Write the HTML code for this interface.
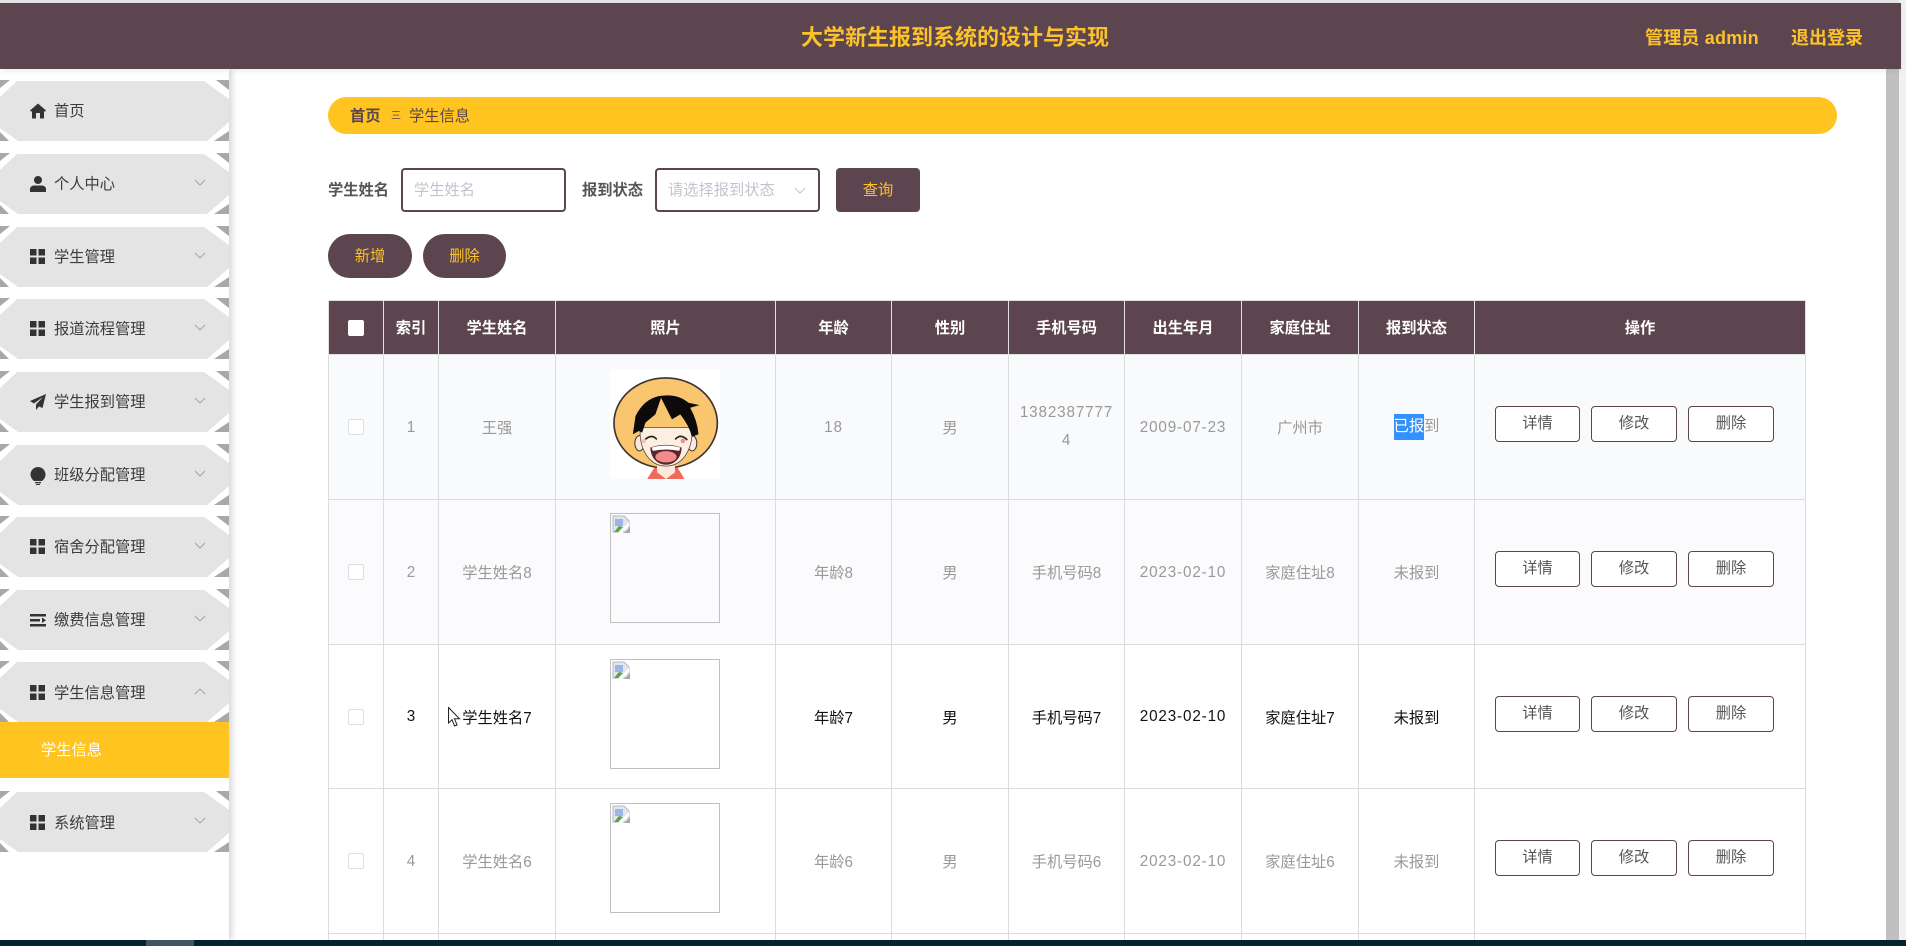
<!DOCTYPE html>
<html lang="zh-CN">
<head>
<meta charset="utf-8">
<title>学生信息</title>
<style>
*{box-sizing:border-box}
html,body{margin:0;padding:0;width:1906px;height:946px;overflow:hidden;background:#fff}
#root{position:relative;width:1906px;height:946px;overflow:hidden;background:#fff;font-family:"Liberation Sans","Noto Sans CJK SC",sans-serif;font-size:15.25px;color:#333}
.abs{position:absolute}
#top{position:absolute;left:0;top:0;width:1906px;height:3px;background:#e6e4e5}
#hd{position:absolute;left:0;top:3px;width:1901px;height:66px;background:#5c454e;color:#fcc22c;font-weight:700;box-shadow:0 2px 6px rgba(0,0,0,.08);z-index:5}
#hd span{position:absolute;white-space:nowrap}
#track{position:absolute;left:1899px;top:0;width:7px;height:946px;background:#f1f1f2}
#thumb{position:absolute;left:1886px;top:69px;width:13px;height:877px;background:#c0c0c0}
#side{position:absolute;left:0;top:69px;width:229px;height:871px;background:#fff;box-shadow:3px 0 6px rgba(0,0,0,.16)}
.it{position:absolute;left:0;width:229px;height:61px}
.it>svg.bg{position:absolute;left:0;top:0}
.it .t{position:absolute;left:54px;top:21px;line-height:22px;color:#3c3c3c;white-space:nowrap}
.it .i{position:absolute;left:30px;top:23px}
.it .c{position:absolute;left:193px;top:26px}
#sub{position:absolute;left:0;top:722px;width:229px;height:56px;background:#ffc420;color:#fff;line-height:58px;padding-left:41px}
#crumb{position:absolute;left:328px;top:97px;width:1509px;height:37px;border-radius:19px;background:#ffc420;line-height:39px;color:#5c454e;white-space:nowrap}
#crumb b,#crumb i,#crumb span{position:absolute;top:0;font-style:normal}
.lbl{position:absolute;top:168px;line-height:46px;color:#555;font-weight:700}
.inp{position:absolute;top:168px;height:44px;width:165px;border:2px solid #5c454e;border-radius:4px;background:#fff;color:#c0c4cc;line-height:41px;padding-left:11px;white-space:nowrap}
.btn{position:absolute;height:44px;background:#5c454e;color:#fcc22c;text-align:center;line-height:45px}
#wrap{position:absolute;left:328px;top:300px;width:1478px;height:640px;overflow:hidden}
#tb{width:1477px;border-collapse:collapse;table-layout:fixed;text-align:center;color:#999}
#tb th{height:54px;background:#5c454e;color:#fff;font-weight:700;border:1px solid #e3dfe1;padding:0 0 2px}
#tb th.c{padding:0}
#tb td{height:145px;border:1px solid #dcdcdf;padding:0;vertical-align:middle}
#tb tr.h td{height:144px}
#tb tr.e td{height:8px}
#tb tr.a td{background:#f9fafc}
#tb tr.b td{background:#fbfbfd}
#tb tr.h td{color:#111;background:#fff}
.n{letter-spacing:.85px}
.cb{display:inline-block;width:16px;height:16px;border:1px solid #dcdfe6;border-radius:2px;background:#fff;vertical-align:middle;position:relative;top:0}
.ph{display:block;width:110px;height:110px;margin:0 auto;position:relative;top:-3px;left:-.5px}
tr.b .ph{top:-4px}
.ph.br{border:1px solid #c0c0c0}
.ph.br svg{position:absolute;left:1px;top:1px}
.ops{display:flex;padding-left:20px;position:relative;top:-3px}
.ops span{display:block;width:86px;height:36px;margin-right:11px;border:1px solid #5c454e;border-radius:4px;color:#555;line-height:33px;background:#fff;text-align:center}
.ops span:first-child{width:85px}
.sel{background:#3390ff;color:#fff;display:inline-block;line-height:26px;height:26px}
#bar{position:absolute;left:0;top:940px;width:1906px;height:6px;background:#03242e;z-index:8}
#bar i{position:absolute;left:146px;top:0;width:48px;height:6px;background:#3d5660}
</style>
</head>
<body>
<div id="root">
<svg width="0" height="0" style="position:absolute">
<defs>
<symbol id="m" viewBox="0 0 229 61">
<polygon fill="#a8a8a8" points="0,0 10,0 0,8"/><polygon fill="#a8a8a8" points="216,0 229,0 229,10"/>
<polygon fill="#a8a8a8" points="229,51 229,61 214,61"/><polygon fill="#a8a8a8" points="0,52 0,61 9,61"/>
<polygon fill="#e4e4e4" points="17,1 204,1 229,19 229,42 207,61 18,61 0,48 0,17"/>
</symbol>
<symbol id="g" viewBox="0 0 15 15"><path fill="#333" d="M0 0h6.500v6.500H0zM8.500 0h6.500v6.500H8.500zM0 8.500h6.500v6.500H0zM8.500 8.500h6.500v6.500H8.500z"/></symbol>
<symbol id="v" viewBox="0 0 14 8"><path fill="none" stroke="#a3a3a3" d="M2 1l5 5 5-5"/></symbol>
<symbol id="u" viewBox="0 0 14 8"><path fill="none" stroke="#a3a3a3" d="M2 7l5-5 5 5"/></symbol>
<symbol id="bk" viewBox="0 0 19 19"><path fill="#dfe6f2" stroke="#b8b8b8" d="M1 1h11l5 5v11H1z"/><path fill="#9ab6e4" d="M3 4h8v7H3z"/><path fill="#5aa53a" d="M2 17l5-6 4 1-5 5z"/><path fill="#fff" d="M6 18L17 7v4l-7 7z"/><path fill="#a8a8a8" d="M18 12v6h-6z"/></symbol>
</defs>
</svg>

<div id="top"></div>
<div id="hd">
  <span style="left:801px;top:20px;font-size:22px;line-height:30px">大学新生报到系统的设计与实现</span>
  <span style="left:1645px;top:21px;font-size:18px;line-height:28px;letter-spacing:.2px">管理员 admin</span>
  <span style="left:1791px;top:21px;font-size:18px;line-height:28px">退出登录</span>
</div>
<div id="track"></div>
<div id="thumb"></div>

<div id="side"></div>

<div class="it" style="top:80px"><svg class="bg" width="229" height="61"><use href="#m"/></svg>
<svg class="i" width="16" height="16" viewBox="0 0 16 16"><path fill="#333" d="M8 .5L0 7.500l1 1.200L2 8v7.500h4V10h4v5.500h4V8l1 .7 1-1.200z"/></svg><span class="t">首页</span></div>

<div class="it" style="top:153px"><svg class="bg" width="229" height="61"><use href="#m"/></svg>
<svg class="i" width="16" height="16" viewBox="0 0 16 16"><circle cx="8" cy="4" r="4" fill="#333"/><path fill="#333" d="M0 16v-3c0-2 2-3.500 4-3.500h8c2 0 4 1.500 4 3.500v3z"/></svg><span class="t">个人中心</span><svg class="c" width="14" height="8"><use href="#v"/></svg></div>

<div class="it" style="top:226px"><svg class="bg" width="229" height="61"><use href="#m"/></svg>
<svg class="i" width="15" height="15"><use href="#g"/></svg><span class="t">学生管理</span><svg class="c" width="14" height="8"><use href="#v"/></svg></div>

<div class="it" style="top:298px"><svg class="bg" width="229" height="61"><use href="#m"/></svg>
<svg class="i" width="15" height="15"><use href="#g"/></svg><span class="t">报道流程管理</span><svg class="c" width="14" height="8"><use href="#v"/></svg></div>

<div class="it" style="top:371px"><svg class="bg" width="229" height="61"><use href="#m"/></svg>
<svg class="i" width="16" height="16" viewBox="0 0 16 16"><path fill="#333" d="M16 0L0 7l4 2.500L13 3 6 10.500V16l3-3.500 3.500 1.500z"/></svg><span class="t">学生报到管理</span><svg class="c" width="14" height="8"><use href="#v"/></svg></div>

<div class="it" style="top:444px"><svg class="bg" width="229" height="61"><use href="#m"/></svg>
<svg class="i" width="16" height="18" viewBox="0 0 16 18"><path fill="#333" d="M8 0a7.500 7.500 0 0 1 4.500 13.500v.5h-9v-.5A7.500 7.500 0 0 1 8 0zM5 15h6v1.200H5zM6 17h4v1H6z"/></svg><span class="t">班级分配管理</span><svg class="c" width="14" height="8"><use href="#v"/></svg></div>

<div class="it" style="top:516px"><svg class="bg" width="229" height="61"><use href="#m"/></svg>
<svg class="i" width="15" height="15"><use href="#g"/></svg><span class="t">宿舍分配管理</span><svg class="c" width="14" height="8"><use href="#v"/></svg></div>

<div class="it" style="top:589px"><svg class="bg" width="229" height="61"><use href="#m"/></svg>
<svg class="i" width="16" height="16" viewBox="0 0 16 16"><path fill="#333" d="M0 2h16v2.500H0zM0 7h10v2.500H0zM0 12h16v2.500H0zM12 5.500l4 2.800-4 2.700z"/></svg><span class="t">缴费信息管理</span><svg class="c" width="14" height="8"><use href="#v"/></svg></div>

<div class="it" style="top:661px"><svg class="bg" width="229" height="61"><use href="#m"/></svg>
<svg class="i" width="15" height="15" style="top:24px"><use href="#g"/></svg><span class="t" style="top:22px">学生信息管理</span><svg class="c" width="14" height="8"><use href="#u"/></svg></div>

<div id="sub">学生信息</div>

<div class="it" style="top:791px"><svg class="bg" width="229" height="61"><use href="#m"/></svg>
<svg class="i" width="15" height="15" style="top:24px"><use href="#g"/></svg><span class="t" style="top:22px">系统管理</span><svg class="c" width="14" height="8"><use href="#v"/></svg></div>

<div id="crumb"><b style="left:22px">首页</b><i style="left:63px;font-size:10px;font-weight:400">三</i><span style="left:81px">学生信息</span></div>

<div class="lbl" style="left:328px">学生姓名</div>
<div class="inp" style="left:401px">学生姓名</div>
<div class="lbl" style="left:582px">报到状态</div>
<div class="inp" style="left:655px">请选择报到状态<svg style="position:absolute;left:136px;top:17px" width="14" height="8"><path fill="none" stroke="#c0c4cc" d="M2 1l5 5 5-5"/></svg></div>
<div class="btn" style="left:836px;top:168px;width:84px;border-radius:4px">查询</div>
<div class="btn" style="left:328px;top:234px;width:84px;border-radius:22px">新增</div>
<div class="btn" style="left:423px;top:234px;width:83px;border-radius:22px">删除</div>

<div id="wrap">
<table id="tb">
<colgroup><col style="width:55px"><col style="width:55px"><col style="width:117px"><col style="width:220px"><col style="width:116px"><col style="width:117px"><col style="width:116px"><col style="width:117px"><col style="width:117px"><col style="width:116px"><col style="width:331px"></colgroup>
<tr><th class="c"><span class="cb" style="border-color:#fff"></span></th><th>索引</th><th>学生姓名</th><th>照片</th><th>年龄</th><th>性别</th><th>手机号码</th><th>出生年月</th><th>家庭住址</th><th>报到状态</th><th>操作</th></tr>

<tr class="a"><td><span class="cb"></span></td><td>1</td><td>王强</td><td>
<svg class="ph" width="110" height="110" viewBox="58 53 332 332" style="background:#fff">
<ellipse cx="226" cy="216" rx="156" ry="136" fill="#f9c66f" stroke="#3d3330" stroke-width="5"/>
<path fill="#f0695a" d="M170 385l22-34h70l21 34z"/>
<path fill="#fde9dc" d="M200 345h54v20l-27 20-27-20z"/>
<ellipse cx="147" cy="277" rx="14" ry="23" fill="#fde9dc" stroke="#3d3330" stroke-width="3"/>
<ellipse cx="306" cy="277" rx="14" ry="23" fill="#fde9dc" stroke="#3d3330" stroke-width="3"/>
<path fill="#fdeee2" stroke="#3d3330" stroke-width="2" d="M150 230h155c6 50-20 116-78 116s-84-66-77-116z"/>
<path fill="#0c0a0a" d="M127 250L135 195Q160 145 205 135Q260 125 295 155L328 162L300 170Q322 210 325 250L305 258Q298 225 270 190L245 205L212 140L195 190L165 215L155 245L145 240Z"/>
<path fill="none" stroke="#2a2020" stroke-width="5" stroke-linecap="round" d="M162 268q20-20 36-4M256 264q16-16 34 2"/>
<circle cx="160" cy="270" r="7" fill="#f7bfc0"/><circle cx="278" cy="270" r="7" fill="#f08f8f"/>
<path fill="#5c2626" d="M180 290q46-16 94 0c0 30-20 52-47 52s-47-22-47-52z"/>
<path fill="#fff" d="M184 290q42-12 86 0l-3 10q-40-8-80 0z"/>
<ellipse cx="227" cy="318" rx="32" ry="17" fill="#f28c8c"/>
</svg></td><td class="n">18</td><td>男</td><td class="n" style="line-height:28px">1382387777<br>4</td><td class="n">2009-07-23</td><td>广州市</td><td><span class="sel">已报</span>到</td><td><div class="ops"><span>详情</span><span>修改</span><span>删除</span></div></td></tr>

<tr class="b"><td><span class="cb"></span></td><td>2</td><td>学生姓名8</td><td><div class="ph br"><svg width="19" height="19"><use href="#bk"/></svg></div></td><td>年龄8</td><td>男</td><td>手机号码8</td><td class="n">2023-02-10</td><td>家庭住址8</td><td>未报到</td><td><div class="ops"><span>详情</span><span>修改</span><span>删除</span></div></td></tr>

<tr class="h"><td><span class="cb"></span></td><td>3</td><td>学生姓名7</td><td><div class="ph br"><svg width="19" height="19"><use href="#bk"/></svg></div></td><td>年龄7</td><td>男</td><td>手机号码7</td><td class="n">2023-02-10</td><td>家庭住址7</td><td>未报到</td><td><div class="ops"><span>详情</span><span>修改</span><span>删除</span></div></td></tr>

<tr><td><span class="cb"></span></td><td>4</td><td>学生姓名6</td><td><div class="ph br"><svg width="19" height="19"><use href="#bk"/></svg></div></td><td>年龄6</td><td>男</td><td>手机号码6</td><td class="n">2023-02-10</td><td>家庭住址6</td><td>未报到</td><td><div class="ops"><span>详情</span><span>修改</span><span>删除</span></div></td></tr>

<tr class="e"><td></td><td></td><td></td><td></td><td></td><td></td><td></td><td></td><td></td><td></td><td></td></tr>
</table>
</div>

<svg class="abs" style="left:448px;top:707px;z-index:6" width="13" height="20" viewBox="0 0 13 20"><path fill="#fff" stroke="#222" d="M.5.500v15.500l3.500-3.300 2.600 6.300 2.500-1-2.600-6.200h5z"/></svg>

<div id="bar"><i></i></div>
</div>
</body>
</html>
